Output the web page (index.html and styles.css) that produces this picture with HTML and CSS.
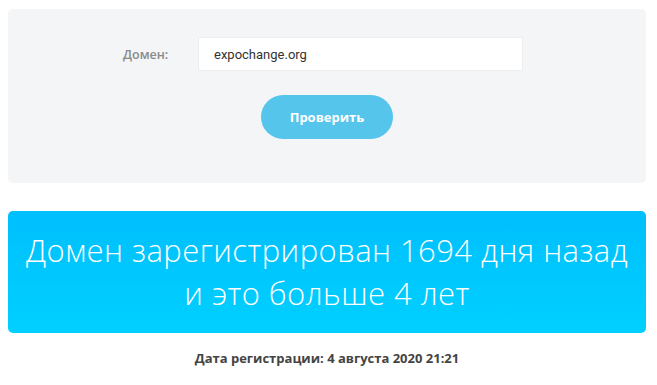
FILE: index.html
```html
<!DOCTYPE html>
<html lang="ru">
<head>
<meta charset="utf-8">
<link rel="stylesheet" href="styles.css">
</head>
<body>
<div class="page">
  <form class="panel">
    <div class="row">
      <label class="label" for="domain">Домен:</label>
      <input class="field" id="domain" type="text" value="expochange.org">
    </div>
    <div class="actions">
      <button class="btn" type="button">Проверить</button>
    </div>
  </form>
  <div class="result">
    <div class="result-text">Домен зарегистрирован 1694 дня назад<br>и это больше 4 лет</div>
  </div>
  <p class="date">Дата регистрации: 4 августа 2020 21:21</p>
</div>
</body>
</html>
```

FILE: styles.css
```css
* { box-sizing: border-box; }
html, body { margin: 0; padding: 0; background: #fff; }
body { font-family: "Open Sans", "Noto Sans", sans-serif; }
.page { padding: 9px 11px 0 8px; }
.panel {
  margin: 0;
  background: #f3f5f6;
  border-radius: 5px;
  height: 174px;
  padding-top: 28px;
}
.row {
  display: flex;
  align-items: center;
  padding-left: 115px;
}
.label {
  width: 75px;
  font-size: 12.5px;
  font-weight: 600;
  color: #8a8a8a;
}
.field {
  width: 325px;
  height: 34px;
  border: 1px solid #eceeef;
  background: #fff;
  padding: 0 15px;
  font-family: Roboto, "Liberation Sans", sans-serif;
  font-size: 13px;
  color: #333;
  outline: none;
}
.actions {
  display: flex;
  justify-content: center;
  margin-top: 24px;
}
.btn {
  width: 132px;
  height: 44px;
  border: 0;
  border-radius: 22px;
  background: #56c5ec;
  color: #fff;
  font-family: "Open Sans", sans-serif;
  font-weight: 700;
  font-size: 13px;
  cursor: pointer;
}
.result {
  margin-top: 28px;
  height: 122px;
  border-radius: 5px;
  background: linear-gradient(#00bffd, #00d0ff);
  display: flex;
  align-items: center;
  justify-content: center;
}
.result-text {
  color: #fff;
  font-size: 31px;
  font-weight: 350;
  letter-spacing: 0.45px;
  line-height: 43px;
  text-align: center;
}
.date {
  margin: 16px 0 0;
  text-align: center;
  font-size: 13px;
  font-weight: 700;
  color: #444;
}
```
